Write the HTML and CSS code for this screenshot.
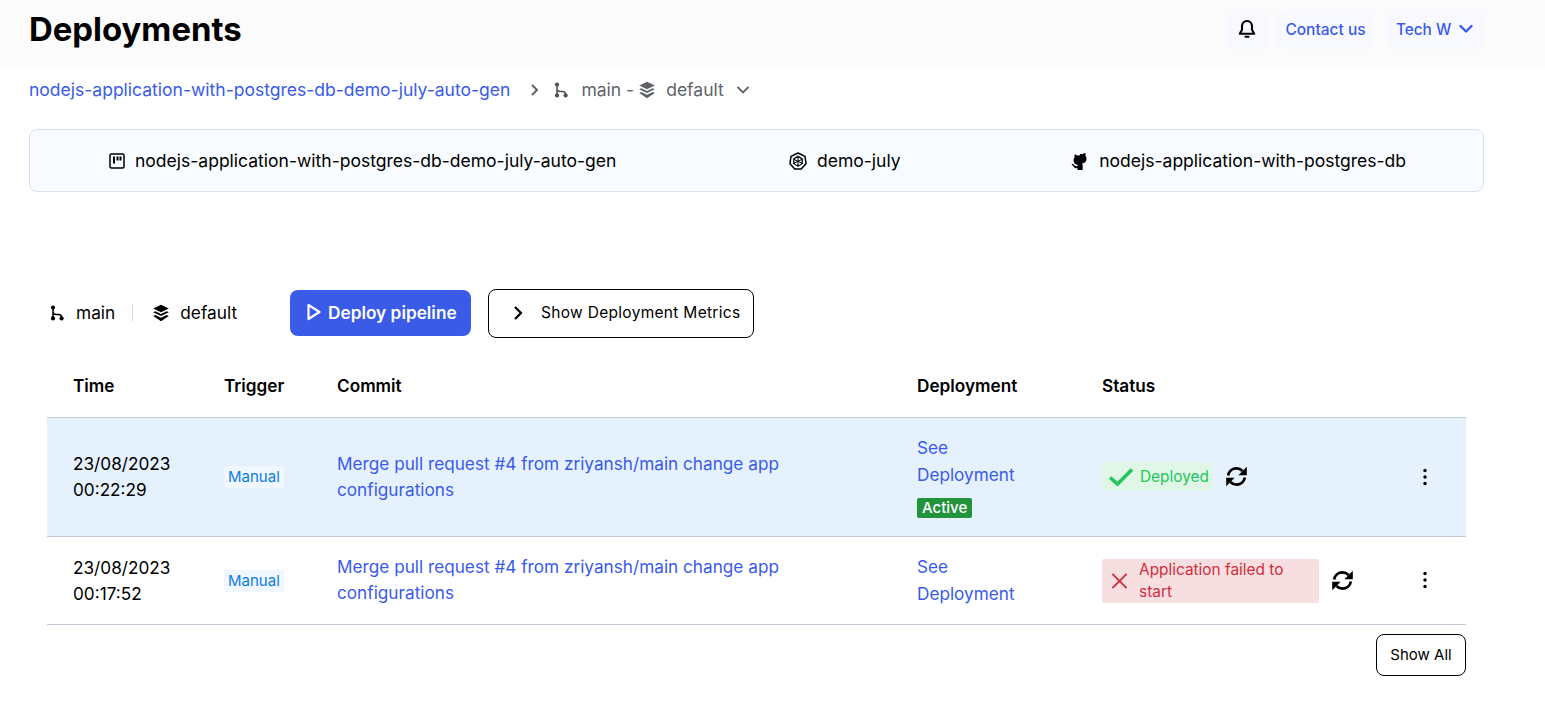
FILE: index.html
```html
<!DOCTYPE html>
<html lang="en">

<head>
    <meta charset="UTF-8">
    <meta name="viewport" content="width=device-width, initial-scale=1.0">
    <title>Deployments</title>
    <link rel="stylesheet" href="styles.css">
</head>

<body>
    <svg class="sprites" width="0" height="0" aria-hidden="true">
        <symbol id="i-branch" viewBox="0 0 16 16">
            <circle cx="4" cy="2.6" r="2.1" fill="currentColor" />
            <circle cx="4" cy="13.4" r="2.1" fill="currentColor" />
            <circle cx="12.6" cy="13.4" r="2.1" fill="currentColor" />
            <path d="M4 3v10M4 6.6c0 2 1.4 3 3.4 3h2c2 0 3.2 1.2 3.2 3.4" fill="none" stroke="currentColor" stroke-width="1.5" />
        </symbol>
        <symbol id="i-layers" viewBox="0 0 18 18">
            <path d="M9 .8l7.8 3.7L9 8.2 1.200 4.500z" fill="currentColor" />
            <path d="M3.300 7.300L9 10l5.700-2.700 2.100 1L9 12 1.200 8.300z" fill="currentColor" />
            <path d="M3.300 11.100L9 13.800l5.700-2.700 2.100 1L9 17.200 1.200 12.100z" fill="currentColor" />
        </symbol>
        <symbol id="i-sync" viewBox="0 0 20 20">
            <path d="M2 9C2.800 5 6 2.300 10 2.300c2.300 0 4.300 1 5.700 2.500M18 11c-.8 4-4 6.700-8 6.700-2.300 0-4.300-1-5.700-2.500" fill="none" stroke="currentColor" stroke-width="2.600" />
            <path d="M19.800 .8v8H11.800zM.2 19.200v-8H8.200z" fill="currentColor" />
        </symbol>
        <symbol id="i-dots" viewBox="0 0 4 18">
            <circle cx="2" cy="2.500" r="1.700" fill="currentColor" />
            <circle cx="2" cy="9" r="1.700" fill="currentColor" />
            <circle cx="2" cy="15.500" r="1.700" fill="currentColor" />
        </symbol>
    </svg>

    <header class="topbar">
        <h1>Deployments</h1>
        <div class="topbar-actions">
            <button class="top-btn bell-btn" aria-label="Notifications">
                <svg width="20" height="20" viewBox="0 0 20 20" fill="none" stroke="currentColor" stroke-width="2.100" stroke-linejoin="round" stroke-linecap="round">
                    <path d="M10 2c-3.200 0-5 2.500-5 5.300v3.400L2.800 14.800h14.400L15 10.700V7.300C15 4.500 13.200 2 10 2z" />
                    <path d="M8.500 17.800h3" />
                </svg>
            </button>
            <button class="top-btn contact-btn">Contact us</button>
            <button class="top-btn user-btn">Tech W
                <svg width="14" height="14" viewBox="0 0 14 14" fill="none" stroke="currentColor" stroke-width="2.400" stroke-linecap="round" stroke-linejoin="round">
                    <path d="M1.500 4l5.500 5.500L12.500 4" />
                </svg>
            </button>
        </div>
    </header>

    <main class="content">
        <nav class="crumbs">
            <a class="link" href="#">nodejs-application-with-postgres-db-demo-july-auto-gen</a>
            <svg class="crumb-sep" width="12" height="14" viewBox="0 0 12 14" fill="none" stroke="currentColor" stroke-width="2">
                <path d="M3 2l5 5-5 5" />
            </svg>
            <svg class="icon-branch" width="16" height="16"><use href="#i-branch" /></svg>
            <span class="crumb-main">main -</span>
            <svg class="crumb-stack" width="18" height="18"><use href="#i-layers" /></svg>
            <span class="crumb-env">default</span>
            <svg class="crumb-caret" width="14" height="14" viewBox="0 0 14 14" fill="none" stroke="currentColor" stroke-width="1.800">
                <path d="M1.500 4l5.500 5.500L12.500 4" />
            </svg>
        </nav>

        <section class="info-box">
            <div class="info-item">
                <svg width="16" height="16" viewBox="0 0 16 16" fill="none" stroke="currentColor" stroke-width="1.500">
                    <rect x="1" y="1" width="14" height="14" rx="1.500" />
                    <path d="M5 3.500v7M8.500 3.500v4M11.500 3.500v4" stroke-width="2" />
                </svg>
                nodejs-application-with-postgres-db-demo-july-auto-gen
            </div>
            <div class="info-item info-cluster">
                <svg width="18" height="18" viewBox="0 0 18 18" fill="none" stroke="currentColor">
                    <path d="M9 1l7 3.400 1 7.300-4.800 5.300H5.800L1 11.700l1-7.300z" stroke-width="1.500" stroke-linejoin="round" />
                    <circle cx="9" cy="9.300" r="4.300" stroke-width="1.300" />
                    <path d="M9 3.500v11.600M3.800 6.800l10.400 5M14.200 6.800l-10.400 5" stroke-width="1" />
                </svg>
                demo-july
            </div>
            <div class="info-item">
                <svg width="18" height="18" viewBox="2 1 20 21" fill="currentColor">
                    <path d="M12 3.200c1 0 2 .13 2.900.4 2-1.400 3.300-1.300 3.300-1.300.6 1.500.3 2.800.15 3.150.75.85 1.250 1.900 1.250 3.200 0 4.300-2.500 5.400-5.200 5.700.45.4.75 1.100.75 2.200V22H9v-2.200c-2.400.5-3.700-.5-4.300-1.700-.4-.8-1-1.300-2.500-1.900l.6-1.500c1.500.4 2.300 1.200 2.900 2 .7 1 1.800 1.100 3.300.7.100-.6.350-1.100.7-1.400-2.700-.3-5.200-1.400-5.200-5.700 0-1.300.5-2.350 1.250-3.200-.15-.35-.45-1.650.15-3.150 0 0 1.300-.1 3.300 1.300.9-.27 1.800-.4 2.800-.4z" />
                </svg>
                nodejs-application-with-postgres-db
            </div>
        </section>

        <section class="toolbar">
            <div class="env-label">
                <svg class="icon-branch" width="16" height="16"><use href="#i-branch" /></svg>
                <span>main</span>
                <i class="env-divider"></i>
                <svg width="18" height="18"><use href="#i-layers" /></svg>
                <span>default</span>
            </div>
            <button class="btn-primary">
                <svg width="16" height="18" viewBox="0 0 16 18" fill="none" stroke="currentColor" stroke-width="2.200" stroke-linejoin="round">
                    <path d="M2.500 2l11 7-11 7z" />
                </svg>
                Deploy pipeline
            </button>
            <button class="btn-outline">
                <svg width="12" height="16" viewBox="0 0 12 16" fill="none" stroke="currentColor" stroke-width="2.200">
                    <path d="M3 2l6 6-6 6" />
                </svg>
                Show Deployment Metrics
            </button>
        </section>

        <table class="deploys">
            <colgroup>
                <col class="col-time">
                <col class="col-trigger">
                <col class="col-commit">
                <col class="col-deploy">
                <col>
            </colgroup>
            <thead>
                <tr>
                    <th>Time</th>
                    <th>Trigger</th>
                    <th>Commit</th>
                    <th>Deployment</th>
                    <th>Status</th>
                </tr>
            </thead>
            <tbody>
                <tr class="row-active">
                    <td>23/08/2023<br>00:22:29</td>
                    <td><span class="tag-manual">Manual</span></td>
                    <td><a class="link" href="#">Merge pull request #4 from zriyansh/main change app configurations</a></td>
                    <td>
                        <a class="link see-link" href="#">See<br>Deployment</a>
                        <span class="tag-active">Active</span>
                    </td>
                    <td>
                        <div class="status-cell">
                            <span class="status status-ok">
                                <svg width="26" height="20" viewBox="0 0 26 20" fill="none" stroke="currentColor" stroke-width="3.600">
                                    <path d="M2 10.500l7.500 6.500L24 2.500" />
                                </svg>
                                Deployed
                            </span>
                            <svg class="sync" width="21" height="21"><use href="#i-sync" /></svg>
                            <svg class="dots" width="4" height="18"><use href="#i-dots" /></svg>
                        </div>
                    </td>
                </tr>
                <tr>
                    <td>23/08/2023<br>00:17:52</td>
                    <td><span class="tag-manual">Manual</span></td>
                    <td><a class="link" href="#">Merge pull request #4 from zriyansh/main change app configurations</a></td>
                    <td><a class="link see-link" href="#">See<br>Deployment</a></td>
                    <td>
                        <div class="status-cell">
                            <span class="status status-fail">
                                <svg width="18" height="18" viewBox="0 0 18 18" fill="none" stroke="currentColor" stroke-width="2">
                                    <path d="M1.500 1.500l15 15M16.500 1.500l-15 15" />
                                </svg>
                                <span class="status-text">Application failed to start</span>
                            </span>
                            <svg class="sync" width="21" height="21"><use href="#i-sync" /></svg>
                            <svg class="dots" width="4" height="18"><use href="#i-dots" /></svg>
                        </div>
                    </td>
                </tr>
            </tbody>
        </table>

        <div class="table-foot">
            <button class="btn-small">Show All</button>
        </div>
    </main>
</body>

</html>
```

FILE: styles.css
```css
* {
    box-sizing: border-box;
}

body {
    margin: 0;
    font-family: Inter, "Liberation Sans", sans-serif;
    color: #000;
    background: #fff;
}

button {
    font-family: inherit;
    cursor: pointer;
}

.sprites {
    position: absolute;
}

.link {
    color: #3a5be8;
    text-decoration: none;
}

.topbar {
    display: flex;
    align-items: center;
    justify-content: space-between;
    height: 68px;
    padding: 0 61px 10px 29px;
    background: #fbfbfc;
}

h1 {
    margin: 0;
    font-size: 32.900px;
    font-weight: 700;
}

.topbar-actions {
    display: flex;
    align-items: center;
    gap: 9px;
}

.top-btn {
    display: flex;
    align-items: center;
    justify-content: center;
    gap: 8px;
    width: 97px;
    height: 39px;
    padding: 0;
    border: none;
    border-radius: 8px;
    background: #f8f9ff;
    color: #3a5be8;
    font-size: 15.500px;
    font-weight: 500;
}

.bell-btn {
    width: 42px;
    height: 41px;
    color: #000;
}

.user-btn {
    justify-content: flex-start;
    margin-left: 4px;
    padding-left: 9px;
    font-size: 15.300px;
}

.content {
    padding: 0 61px 0 29px;
}

.crumbs {
    display: flex;
    align-items: center;
    height: 43px;
    font-size: 17.530px;
    color: #5f6368;
}

.crumb-sep {
    margin-left: 19px;
}

.crumbs .icon-branch {
    margin-left: 12px;
    color: #4d5156;
}

.crumb-main {
    margin-left: 12px;
}

.crumb-stack {
    margin-left: 4px;
}

.crumb-env {
    margin-left: 10px;
}

.crumb-caret {
    margin-left: 12px;
}

.info-box {
    display: flex;
    justify-content: space-between;
    align-items: center;
    height: 63px;
    margin-top: 18px;
    padding: 0 77px 0 79px;
    border: 1px solid #d9e2f1;
    border-radius: 8px;
    background: #f8fbff;
    font-size: 17.530px;
}

.info-item {
    display: flex;
    align-items: center;
    gap: 10px;
}

.info-cluster {
    margin-left: 2px;
}

.toolbar {
    display: flex;
    align-items: center;
    height: 49px;
    margin-top: 97px;
    margin-left: 18px;
}

.env-label {
    display: flex;
    align-items: center;
    gap: 10px;
    width: 243px;
    margin-bottom: 2px;
    padding-left: 2px;
    font-size: 17.300px;
}

.env-label span:first-of-type {
    margin-left: 1px;
}

.env-divider {
    width: 1px;
    height: 17px;
    margin: 0 9px 0 7px;
    background: #d6d8dc;
}

.btn-primary {
    display: flex;
    align-items: center;
    gap: 6px;
    width: 181px;
    height: 46px;
    margin-bottom: 1px;
    padding: 0 0 2px 16px;
    border: none;
    border-radius: 8px;
    background: #3a5be8;
    color: #fff;
    font-size: 17.250px;
    font-weight: 600;
}

.btn-outline {
    display: flex;
    align-items: center;
    gap: 17px;
    width: 266px;
    height: 49px;
    margin-left: 17px;
    padding: 0 0 2px 23px;
    border: 1px solid #000;
    border-radius: 8px;
    background: #fff;
    color: #000;
    font-size: 15.500px;
    font-weight: 400;
    letter-spacing: 0.3px;
}

.deploys {
    width: 1419px;
    margin-left: 18px;
    border-collapse: collapse;
    table-layout: fixed;
    font-size: 17.200px;
}

.col-time {
    width: 151px;
}

.col-trigger {
    width: 113px;
}

.col-commit {
    width: 580px;
}

.col-deploy {
    width: 185px;
}

th {
    height: 79px;
    padding: 17px 0 0 26px;
    border-bottom: 1px solid #c5ccd8;
    text-align: left;
    font-size: 17.200px;
    font-weight: 600;
}

td {
    padding: 0 0 0 26px;
    border-bottom: 1px solid #c5ccd8;
    line-height: 26.500px;
    vertical-align: middle;
}

td:nth-child(1) {
    padding-top: 2px;
}

tbody tr {
    height: 88px;
}

.row-active {
    height: 119px;
    background: #e6f1fe;
}

.row-active td:nth-child(1),
.row-active td:nth-child(3) {
    padding-top: 1px;
    line-height: 26px;
}

td:nth-child(3) {
    padding-right: 110px;
}

tr:not(.row-active) td:nth-child(4) {
    padding-top: 1px;
}

.tag-manual {
    display: inline-block;
    padding: 0 4px;
    border-radius: 2px;
    background: #f1f7fe;
    color: #0a7ce8;
    font-size: 15px;
    line-height: 22px;
}

.see-link {
    display: block;
}

.tag-active {
    display: inline-block;
    margin-top: 10px;
    padding: 0 5px;
    border-radius: 2px;
    background: #22943c;
    color: #fff;
    font-size: 15px;
    font-weight: 500;
    line-height: 20px;
    vertical-align: top;
}

.status-cell {
    position: relative;
    display: flex;
    align-items: center;
    gap: 13px;
}

.status {
    display: flex;
    align-items: center;
    gap: 6px;
    border-radius: 2px;
    font-size: 15.400px;
    line-height: 22px;
}

.status-ok {
    height: 29px;
    padding: 0 4px 0 6px;
    background: #e0f6e6;
    color: #22c55e;
}

.status-fail {
    width: 217px;
    height: 44px;
    margin-top: 2px;
    padding: 0 8px 0 9px;
    gap: 11px;
    background: #f7dfe1;
    color: #cf2e3d;
}

.dots {
    position: absolute;
    left: 321px;
    top: 50%;
    transform: translateY(-50%);
}

.table-foot {
    display: flex;
    justify-content: flex-end;
    width: 1437px;
    margin-top: 9px;
    padding-bottom: 51px;
}

.btn-small {
    width: 90px;
    height: 42px;
    border: 1px solid #000;
    border-radius: 8px;
    background: #fff;
    color: #000;
    font-size: 15px;
}
```
